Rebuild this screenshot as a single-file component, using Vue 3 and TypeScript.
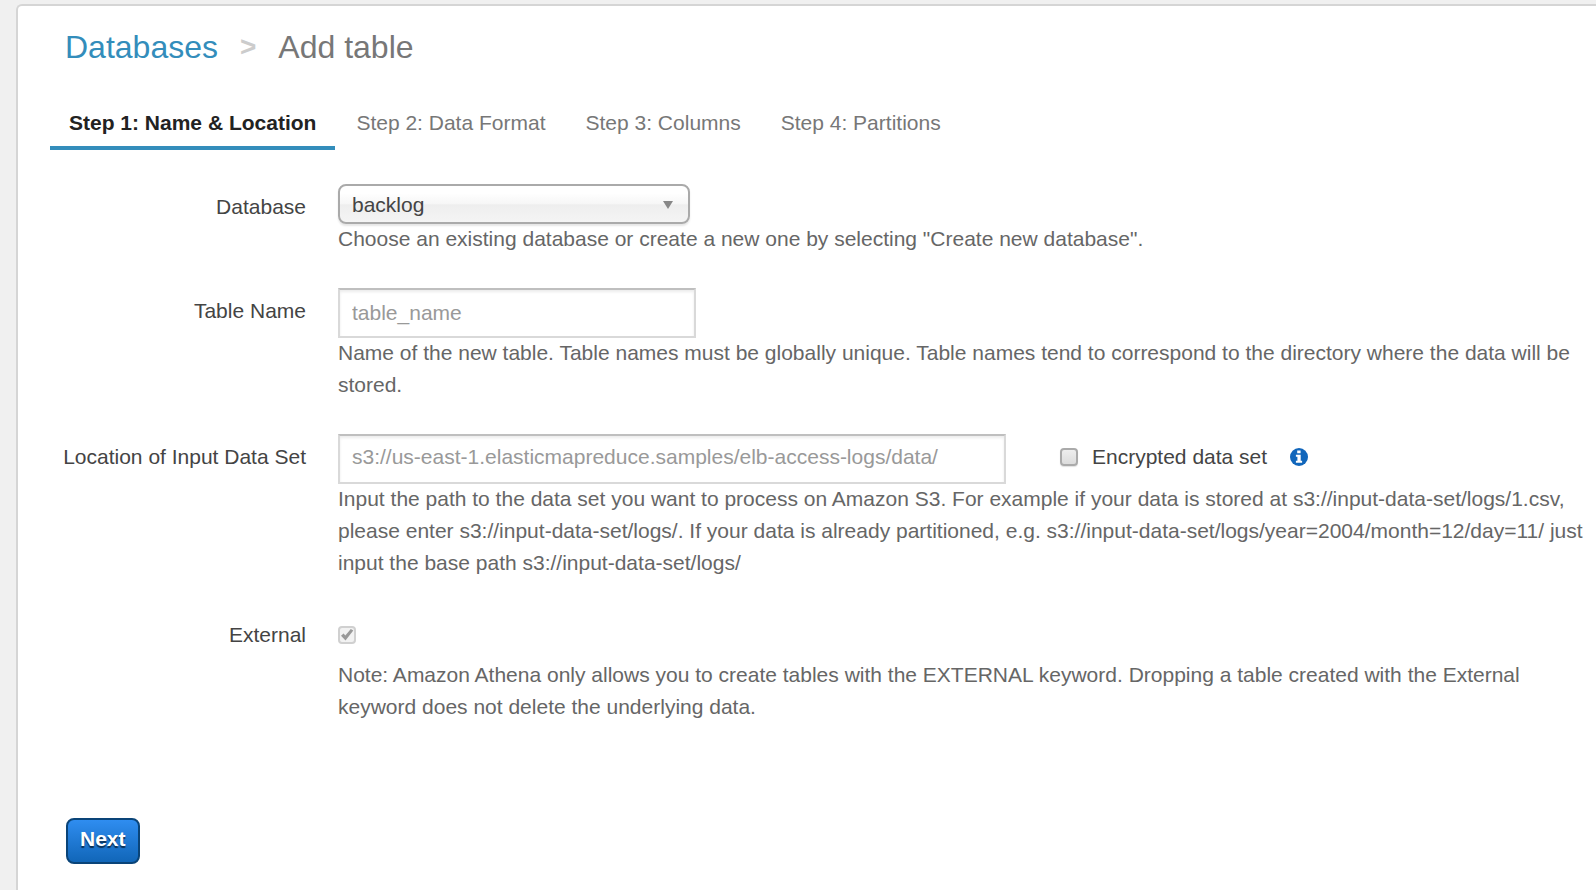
<script setup lang="ts">
import { ref } from 'vue'

const steps: string[] = [
  'Step 1: Name & Location',
  'Step 2: Data Format',
  'Step 3: Columns',
  'Step 4: Partitions',
]
const activeStep = ref(0)

const database = ref('backlog')
const tableName = ref('')
const location = ref('')
const encrypted = ref(false)
</script>

<template>
  <main class="panel">
    <h1 class="breadcrumb">
      <a class="crumb-link" href="#">Databases</a>
      <span class="crumb-sep">&gt;</span>
      <span>Add table</span>
    </h1>

    <nav class="tabs">
      <button
        v-for="(step, i) in steps"
        :key="step"
        type="button"
        class="tab"
        :class="{ active: i === activeStep }"
        @click="activeStep = i"
      >{{ step }}</button>
    </nav>

    <form class="form" @submit.prevent>
      <div class="row">
        <label class="label" for="database">Database</label>
        <div class="field">
          <div class="select-box">
            <select id="database" v-model="database" class="select">
              <option value="backlog">backlog</option>
            </select>
            <svg class="arrow" viewBox="0 0 10 8" aria-hidden="true"><path d="M0 0h10L5 8z" /></svg>
          </div>
          <p class="help">Choose an existing database or create a new one by selecting "Create new database".</p>
        </div>
      </div>

      <div class="row">
        <label class="label" for="table-name">Table Name</label>
        <div class="field">
          <input id="table-name" v-model="tableName" class="text name" type="text" placeholder="table_name" />
          <p class="help">Name of the new table. Table names must be globally unique. Table names tend to correspond to the directory where the data will be stored.</p>
        </div>
      </div>

      <div class="row">
        <label class="label" for="location">Location of Input Data Set</label>
        <div class="field">
          <div class="location-line">
            <input id="location" v-model="location" class="text location" type="text" placeholder="s3://us-east-1.elasticmapreduce.samples/elb-access-logs/data/" />
            <div class="encrypt">
              <input id="encrypted" v-model="encrypted" class="check" type="checkbox" />
              <label class="encrypt-label" for="encrypted">Encrypted data set</label>
              <svg class="info" viewBox="0 0 18 18" aria-hidden="true">
                <circle cx="9" cy="9" r="9" fill="#1166bb" />
                <path d="M7.2 2.6h3.4v2.7H7.2zM5.9 6.8h4.8v5.9h1.4v2H5.9v-2h1.5V8.8H5.9z" fill="#fff" />
              </svg>
            </div>
          </div>
          <p class="help">Input the path to the data set you want to process on Amazon S3. For example if your data is stored at s3://input-data-set/logs/1.csv, please enter s3://input-data-set/logs/. If your data is already partitioned, e.g. s3://input-data-set/logs/year=2004/month=12/day=11/ just input the base path s3://input-data-set/logs/</p>
        </div>
      </div>

      <div class="row">
        <label class="label" for="external">External</label>
        <div class="field">
          <div class="external-line">
            <span class="check-box">
              <input id="external" class="check" type="checkbox" checked disabled />
              <svg class="tick" viewBox="0 0 18 18" aria-hidden="true">
                <path d="M3 9.8l2.6-2.2 1.7 2L12.8 3l2.5 1.5-7.8 9.9z" />
              </svg>
            </span>
          </div>
          <p class="help">Note: Amazon Athena only allows you to create tables with the EXTERNAL keyword. Dropping a table created with the External keyword does not delete the underlying data.</p>
        </div>
      </div>

      <button class="next" type="submit">Next</button>
    </form>
  </main>
</template>

<style>
html,
body {
  min-height: 100%;
  margin: 0;
  background: #f0f0f0;
}
</style>

<style scoped>
.panel {
  box-sizing: border-box;
  min-height: calc(100vh - 4px);
  margin: 4px 0 0 16px;
  padding: 20px 8px 24px 32px;
  overflow: hidden;
  border: 2px solid #d5d5d5;
  border-right: 0;
  border-bottom: 0;
  border-top-left-radius: 6px;
  background: #fff;
  color: #444;
  font: 21px/32px "Liberation Sans", Arial, sans-serif;
}

.breadcrumb {
  display: flex;
  gap: 22px;
  margin: 0;
  padding-left: 15px;
  color: #777;
  font-size: 32px;
  font-weight: 400;
  line-height: 42px;
}

.crumb-link {
  color: #338dbb;
  text-decoration: none;
}

.crumb-sep {
  color: #ccc;
  font-size: 28px;
  font-weight: 700;
}

.tabs {
  display: flex;
  gap: 2px;
  margin-top: 32px;
}

.tab {
  padding: 7px 19px;
  border: 0;
  border-bottom: 4px solid transparent;
  background: none;
  color: #777;
  font: inherit;
  cursor: pointer;
}

.tab.active {
  border-color: #338dbb;
  color: #222;
  font-weight: 700;
}

.form {
  display: flex;
  flex-direction: column;
  gap: 32px;
  margin-top: 34px;
}

.row {
  display: grid;
  grid-template-columns: 256px minmax(0, 1fr);
  gap: 32px;
}

.label {
  padding-top: 7px;
  text-align: right;
  white-space: nowrap;
}

.help {
  margin: -1px 0 1px;
  color: #666;
}

.select-box {
  display: grid;
  align-items: center;
  width: 352px;
  max-width: 100%;
}

.select {
  grid-area: 1 / 1;
  box-sizing: border-box;
  width: 100%;
  height: 40px;
  padding: 2px 40px 0 12px;
  border: 2px solid #aaa;
  border-radius: 8px;
  appearance: none;
  background: linear-gradient(#fff 20%, #f6f6f6 50%, #eee 52%, #f4f4f4 100%);
  box-shadow: 0 2px 2px rgba(0, 0, 0, 0.1);
  color: #444;
  font: inherit;
}

.arrow {
  grid-area: 1 / 1;
  justify-self: end;
  width: 10px;
  height: 8px;
  margin: 2px 17px 0 0;
  fill: #888;
  pointer-events: none;
}

.text {
  display: block;
  box-sizing: border-box;
  max-width: 100%;
  height: 50px;
  padding: 0 12px;
  border: 2px solid #d9d9d9;
  border-top-color: #bfbfbf;
  border-radius: 0;
  background: #fff;
  box-shadow: inset 0 2px 3px rgba(0, 0, 0, 0.08);
  color: #444;
  font: inherit;
}

.text::placeholder {
  color: #999;
  opacity: 1;
}

.name {
  width: 358px;
}

.location {
  width: 668px;
  padding-bottom: 4px;
}

.location-line {
  display: flex;
  gap: 54px;
}

.encrypt {
  display: flex;
  align-items: center;
  height: 46px;
}

.encrypt-label {
  margin: 0 23px 0 14px;
  white-space: nowrap;
}

.check {
  grid-area: 1 / 1;
  flex: none;
  box-sizing: border-box;
  width: 18px;
  height: 18px;
  margin: 0;
  border: 2px solid #aaa;
  border-radius: 4px;
  appearance: none;
  background: linear-gradient(#eee, #dcdcdc);
  box-shadow: 0 1px 1px rgba(0, 0, 0, 0.12);
}

.check:disabled {
  border-color: #d0d0d0;
  background: #f2f2f2;
  box-shadow: none;
}

.check-box {
  display: grid;
}

.tick {
  grid-area: 1 / 1;
  z-index: 1;
  width: 18px;
  height: 18px;
  fill: #999;
  pointer-events: none;
}

.info {
  flex: none;
  width: 18px;
  height: 18px;
}

.external-line {
  display: flex;
  align-items: center;
  height: 46px;
  padding-bottom: 2px;
}

.next {
  align-self: flex-start;
  height: 46px;
  margin: 62px 0 0 16px;
  padding: 0 12px 4px;
  border: 2px solid #0a4478;
  border-radius: 8px;
  background: linear-gradient(#2f8df0, #1166b8);
  color: #fff;
  font: inherit;
  font-weight: 700;
  text-shadow: 0 2px 1px rgba(0, 0, 0, 0.6);
  cursor: pointer;
}
</style>
